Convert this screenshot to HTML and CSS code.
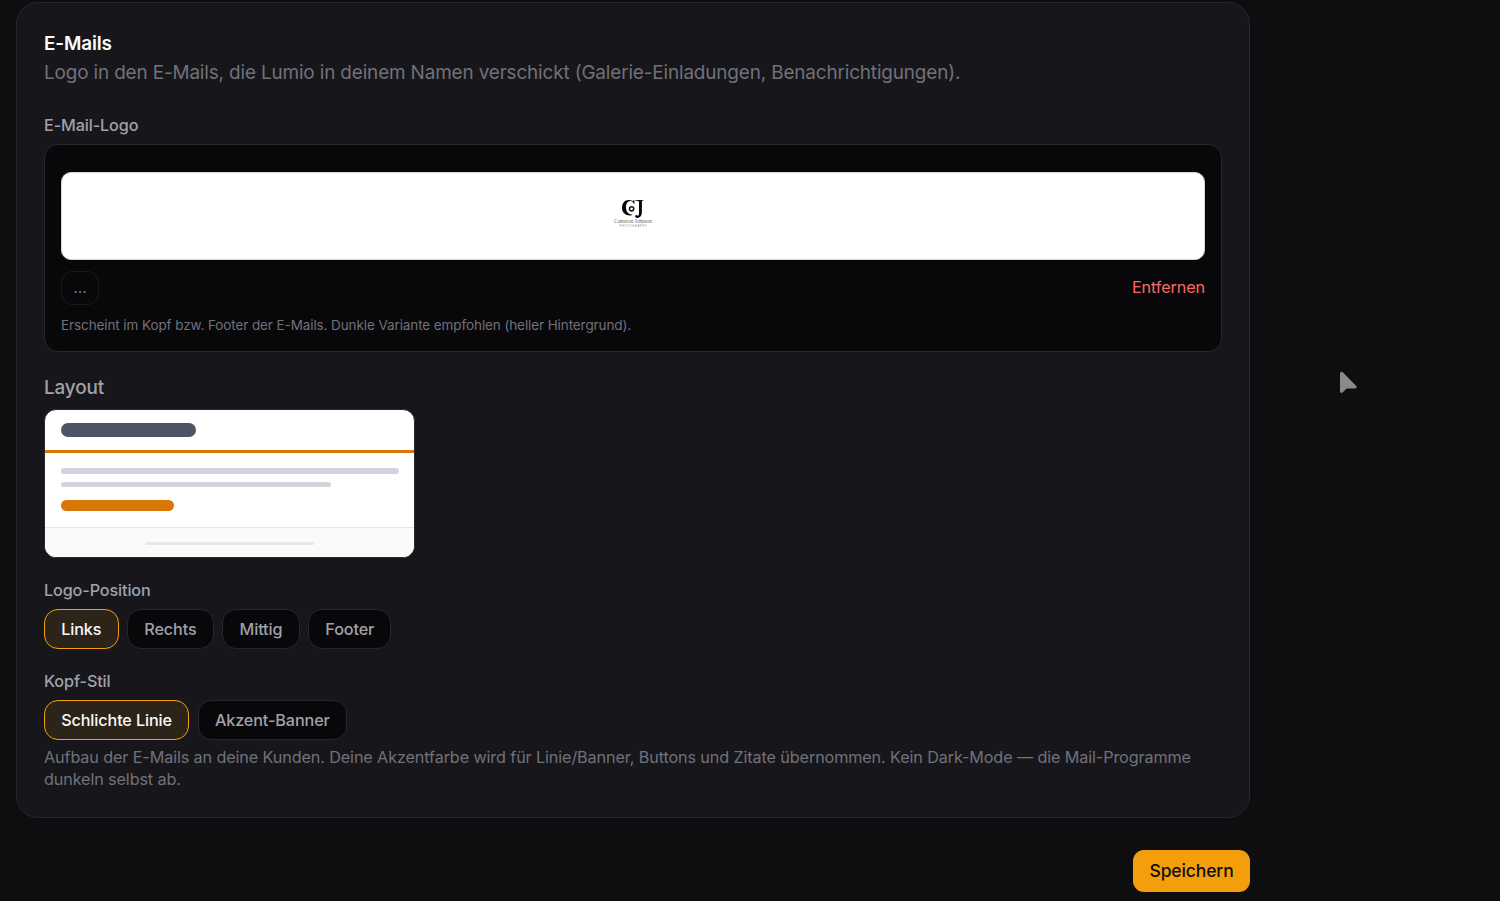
FILE: index.html
```
<!DOCTYPE html>
<html lang="de">

<head>
  <meta charset="UTF-8">
  <meta name="viewport" content="width=device-width, initial-scale=1.0">
  <title>E-Mails</title>
  <link rel="stylesheet" href="styles.css">
</head>

<body>
  <main class="settings">
    <section class="card">
      <h2 class="card__title">E-Mails</h2>
      <p class="card__intro">Logo in den E-Mails, die Lumio in deinem Namen verschickt (Galerie-Einladungen, Benachrichtigungen).</p>

      <div class="label label--logo">E-Mail-Logo</div>
      <div class="upload">
        <div class="upload__preview">
          <svg class="brand" width="42" height="40" viewBox="0 0 42 40">
            <path d="M18.500 4.300C13.300 3.200 10 7 10 11.700c0 5 3.800 8.300 9 7.700l1.800-.6c-4-.2-6.800-2.600-6.800-7.200 0-4 1.600-6.300 4.500-6.500 1.700 0 2.800 1 3.300 2.900h.6V4.200h-.7l-.7.8z" fill="#080808" />
            <circle cx="19.600" cy="12.800" r="2.100" fill="none" stroke="#111" stroke-width="1.500" />
            <path d="M23.400 4h8v.8h-1.500V16c0 3.600-2 6-4.700 5.900-1.700-.1-2.500-1.500-1.800-2.500.7-.8 1.900-.6 2.200.5 1.200-.4 1.400-1.900 1.400-4V6c0-.9-1.200-1.200-3.600-1.200z" fill="#080808" />
            <text class="brand__name" x="21" y="27.300" text-anchor="middle" textLength="38" lengthAdjust="spacingAndGlyphs">Cameron Johnson</text>
            <text class="brand__sub" x="21" y="31" text-anchor="middle" textLength="27">PHOTOGRAPHY</text>
          </svg>
        </div>
        <div class="upload__actions">
          <button class="upload__more">...</button>
          <button class="upload__remove">Entfernen</button>
        </div>
        <p class="upload__hint">Erscheint im Kopf bzw. Footer der E-Mails. Dunkle Variante empfohlen (heller Hintergrund).</p>
      </div>

      <div class="label label--layout">Layout</div>
      <div class="mail">
        <div class="mail__header"><span class="mail__logo"></span></div>
        <div class="mail__body">
          <span class="mail__line"></span>
          <span class="mail__line mail__line--short"></span>
          <span class="mail__button"></span>
        </div>
        <div class="mail__footer"><span></span></div>
      </div>

      <div class="label label--options">Logo-Position</div>
      <div class="options">
        <button class="option is-active">Links</button>
        <button class="option">Rechts</button>
        <button class="option">Mittig</button>
        <button class="option">Footer</button>
      </div>

      <div class="label label--options">Kopf-Stil</div>
      <div class="options">
        <button class="option is-active">Schlichte Linie</button>
        <button class="option">Akzent-Banner</button>
      </div>
      <p class="card__note">Aufbau der E-Mails an deine Kunden. Deine Akzentfarbe wird für Linie/Banner, Buttons und Zitate übernommen. Kein Dark-Mode — die Mail-Programme dunkeln selbst ab.</p>
    </section>

    <div class="settings__footer">
      <button class="save">Speichern</button>
    </div>
  </main>

  <svg class="cursor" width="20" height="26" viewBox="0 0 20 26">
    <path d="M2 3.800v17.300c0 1.900 1.700 2.400 2.800 1.200l3.300-3.200c.5-.5 1-.7 1.700-.7h7c1.900 0 2.400-1.600 1.200-2.700L5 2.400C3.800 1.200 2 2 2 3.800z" fill="#8a8a8a" />
  </svg>
</body>

</html>
```
FILE: styles.css
```
* {
  box-sizing: border-box;
  letter-spacing: -0.0073em;
}

body {
  margin: 0;
  height: 901px;
  overflow: hidden;
  background: #0e0e10;
  color: #a1a1aa;
  font-family: Inter, "Liberation Sans", sans-serif;
}

h2,
p {
  margin: 0;
}

button {
  font-family: inherit;
  margin: 0;
}

.settings {
  width: 1234px;
  margin-left: 16px;
  padding-top: 2px;
}

.card {
  height: 816px;
  padding: 27px;
  background: #17171b;
  border: 1px solid #27272a;
  border-radius: 22px;
}

.card__title {
  color: #fafafa;
  font-size: 18.9px;
  font-weight: 600;
  line-height: 27px;
}

.card__intro {
  margin-top: 2px;
  color: #71717a;
  font-size: 18.9px;
  line-height: 28px;
}

.label {
  font-size: 16.2px;
  font-weight: 500;
  line-height: 22px;
}

.label--logo {
  margin-top: 27px;
}

.upload {
  display: flex;
  flex-direction: column;
  height: 208px;
  margin-top: 8px;
  padding: 27px 16px 0;
  background: #08080a;
  border: 1px solid #27272a;
  border-radius: 14px;
}

.upload__preview {
  display: flex;
  align-items: center;
  justify-content: center;
  height: 88px;
  background: #fff;
  border: 1px solid #d4d4d8;
  border-radius: 10px;
}

.brand {
  overflow: visible;
}

.brand text {
  letter-spacing: 0;
}

.brand__name {
  font: 5.2px "Liberation Serif", serif;
  fill: #666;
}

.brand__sub {
  font: 2.6px "Liberation Sans", sans-serif;
  fill: #888;
}

.upload__actions {
  display: flex;
  justify-content: space-between;
  height: 34px;
  margin-top: 11px;
}

.upload__more {
  width: 38px;
  height: 34px;
  padding: 0 0 2px;
  background: none;
  border: 1px solid #19191c;
  border-radius: 11px;
  color: #71717a;
  font-size: 16.2px;
}

.upload__remove {
  height: 32px;
  padding: 0;
  background: none;
  border: none;
  color: #f8696b;
  font-size: 16.2px;
}

.upload__hint {
  margin-top: 10px;
  color: #71717a;
  font-size: 13.5px;
  line-height: 20px;
}

.label--layout {
  margin-top: 22px;
  font-size: 18.9px;
  line-height: 28px;
}

.mail {
  width: 371px;
  height: 149px;
  margin-top: 7px;
  overflow: hidden;
  background: #fff;
  border: 1px solid #27272a;
  border-radius: 12px;
}

.mail__header {
  height: 43px;
  padding: 13px 16px 0;
  border-bottom: 3px solid #d97706;
}

.mail__logo {
  display: block;
  width: 135px;
  height: 14px;
  background: #4b5563;
  border-radius: 7px;
}

.mail__body {
  display: flex;
  flex-direction: column;
  height: 74px;
  padding: 15px 15px 0 16px;
}

.mail__line {
  height: 6px;
  margin-bottom: 8px;
  background: #d1d5db;
  border-radius: 3px;
}

.mail__line--short {
  width: 80%;
  height: 5px;
}

.mail__button {
  width: 113px;
  height: 11px;
  margin-top: 5px;
  background: #d97706;
  border-radius: 6px;
}

.mail__footer {
  display: flex;
  align-items: center;
  justify-content: center;
  height: 31px;
  background: #fafafa;
  border-top: 1px solid #e5e7eb;
}

.mail__footer span {
  width: 169px;
  height: 3px;
  background: #e5e7eb;
  border-radius: 2px;
}

.label--options {
  margin-top: 21px;
}

.options {
  display: flex;
  gap: 8.6px;
  margin-top: 8px;
}

.option {
  height: 40px;
  padding: 0 16.2px;
  background: #08080a;
  border: 1px solid #27272a;
  border-radius: 14px;
  color: #a1a1aa;
  font-size: 16.2px;
  font-weight: 500;
}

.option.is-active {
  background: #2d2419;
  border-color: #f59e0b;
  color: #fafafa;
}

.card__note {
  margin-top: 7px;
  color: #71717a;
  font-size: 16.2px;
  line-height: 21.6px;
}

.settings__footer {
  display: flex;
  justify-content: flex-end;
  margin-top: 32px;
}

.save {
  width: 117px;
  height: 42px;
  padding: 0 0 2px;
  background: #f59e0b;
  border: none;
  border-radius: 11px;
  color: #0e0e10;
  font-size: 17.5px;
  font-weight: 500;
}

/* pointer lies over the page */
.cursor {
  position: absolute;
  left: 1338px;
  top: 370px;
}
```
